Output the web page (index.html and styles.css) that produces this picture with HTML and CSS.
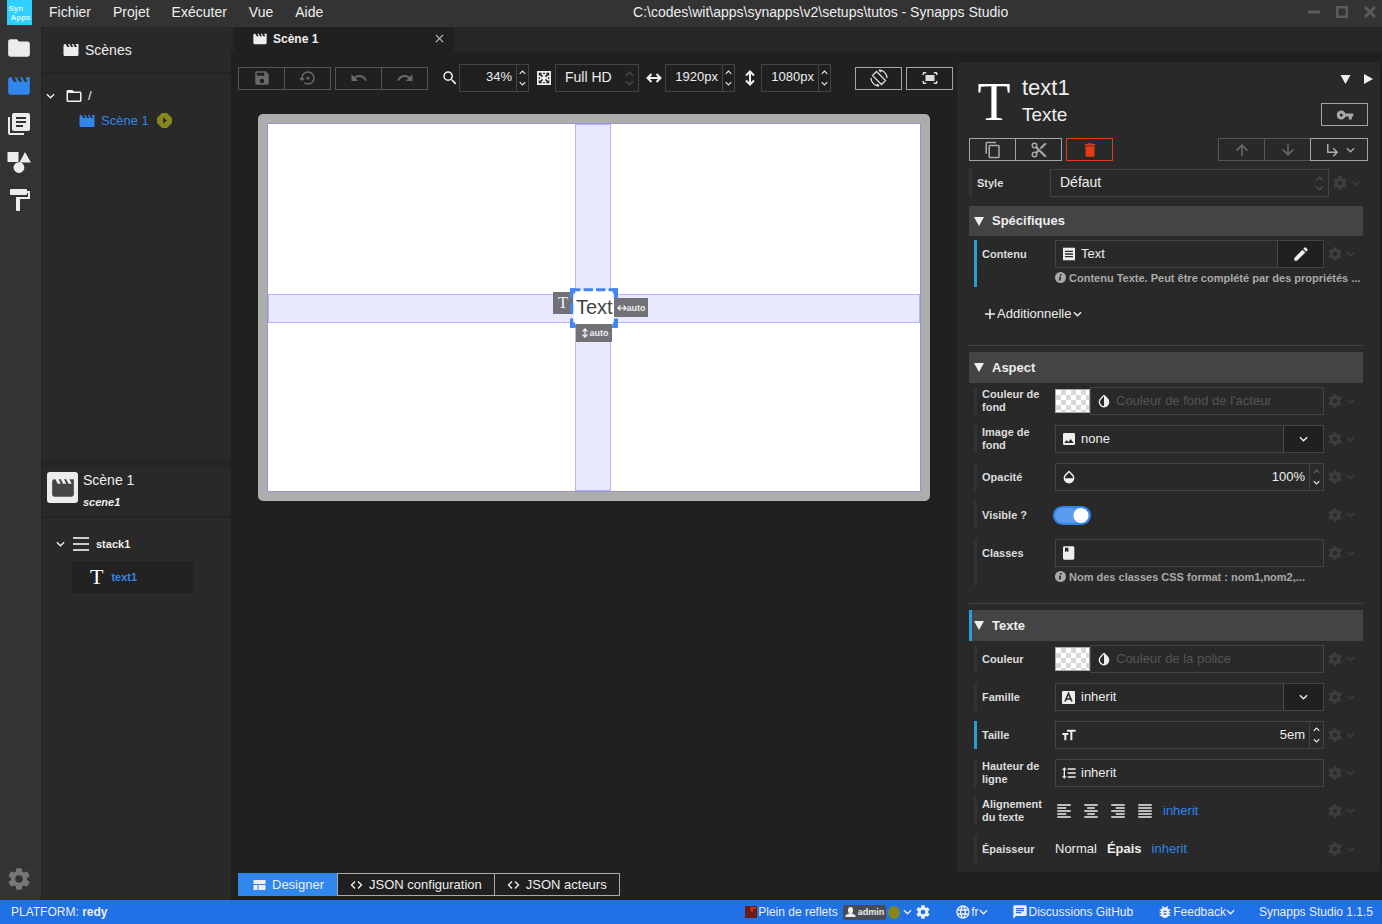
FILE: index.html
```html
<!DOCTYPE html>
<html lang="fr">
<head>
<meta charset="utf-8">
<title>Synapps Studio</title>
<meta name="viewport" content="width=device-width, initial-scale=1">
<link rel="stylesheet" href="styles.css">
</head>
<body>
<svg class="sprite" aria-hidden="true">
<symbol id="i-folder" viewBox="0 0 24 24"><path d="M10,4H4C2.89,4 2,4.89 2,6V18A2,2 0 0,0 4,20H20A2,2 0 0,0 22,18V8C22,6.89 21.1,6 20,6H12L10,4Z"/></symbol>
<symbol id="i-folder-o" viewBox="0 0 24 24"><path d="M20,18H4V8H20M20,6H12L10,4H4C2.89,4 2,4.89 2,6V18A2,2 0 0,0 4,20H20A2,2 0 0,0 22,18V8C22,6.89 21.1,6 20,6Z"/></symbol>
<symbol id="i-movie" viewBox="0 0 24 24"><path d="M18,4L20,8H17L15,4H13L15,8H12L10,4H8L10,8H7L5,4H4A2,2 0 0,0 2,6V18A2,2 0 0,0 4,20H20A2,2 0 0,0 22,18V4H18Z"/></symbol>
<symbol id="i-library" viewBox="0 0 24 24"><path d="M16,15H9V13H16M19,11H9V9H19M19,7H9V5H19M21,1H7C5.89,1 5,1.89 5,3V17C5,18.11 5.9,19 7,19H21C22.11,19 23,18.11 23,17V3C23,1.89 22.1,1 21,1M3,5V21H17V23H3A2,2 0 0,1 1,21V5H3Z"/></symbol>
<symbol id="i-shapes" viewBox="0 0 24 24"><path d="M0.500,2H11.500V12H0.500ZM18,2L24,12.500H12.500ZM12,12.200A5.400,5.400 0 1,1 11.900,12.200Z"/></symbol>
<symbol id="i-roller" viewBox="0 0 24 24"><path d="M20,3V2A1,1 0 0,0 19,1H4A1,1 0 0,0 3,2V6A1,1 0 0,0 4,7H19A1,1 0 0,0 20,6V5H21V9H9V22A1,1 0 0,0 10,23H12A1,1 0 0,0 13,22V11H23V3H20Z"/></symbol>
<symbol id="i-cog" viewBox="0 0 24 24"><path d="M12,15.5A3.5,3.5 0 0,1 8.5,12A3.5,3.5 0 0,1 12,8.5A3.5,3.5 0 0,1 15.5,12A3.5,3.5 0 0,1 12,15.5M19.43,12.97C19.47,12.65 19.5,12.33 19.5,12C19.5,11.67 19.47,11.34 19.43,11L21.54,9.37C21.73,9.22 21.78,8.95 21.66,8.73L19.66,5.27C19.54,5.05 19.27,4.96 19.05,5.05L16.56,6.05C16.04,5.66 15.5,5.32 14.87,5.07L14.5,2.42C14.46,2.18 14.25,2 14,2H10C9.75,2 9.54,2.18 9.5,2.42L9.13,5.07C8.5,5.32 7.96,5.66 7.44,6.05L4.95,5.05C4.73,4.96 4.46,5.05 4.34,5.27L2.34,8.73C2.21,8.95 2.27,9.22 2.46,9.37L4.57,11C4.53,11.34 4.5,11.67 4.5,12C4.5,12.33 4.53,12.65 4.57,12.97L2.46,14.63C2.27,14.78 2.21,15.05 2.34,15.27L4.34,18.73C4.46,18.95 4.73,19.03 4.95,18.95L7.44,17.94C7.96,18.34 8.5,18.68 9.13,18.93L9.5,21.58C9.54,21.82 9.75,22 10,22H14C14.25,22 14.46,21.82 14.5,21.58L14.87,18.93C15.5,18.67 16.04,18.34 16.56,17.94L19.05,18.95C19.27,19.03 19.54,18.95 19.66,18.73L21.66,15.27C21.78,15.05 21.73,14.78 21.54,14.63L19.43,12.97Z"/></symbol>
<symbol id="i-chev" viewBox="0 0 10 6"><path d="M1,1L5,5L9,1" fill="none" stroke="currentColor" stroke-width="1.500"/></symbol>
<symbol id="i-chev-up" viewBox="0 0 10 6"><path d="M1,5L5,1L9,5" fill="none" stroke="currentColor" stroke-width="1.500"/></symbol>
<symbol id="i-close" viewBox="0 0 10 10"><path d="M1,1L9,9M9,1L1,9" fill="none" stroke="currentColor" stroke-width="1.400"/></symbol>
<symbol id="i-save" viewBox="0 0 24 24"><path d="M15,9H5V5H15M12,19A3,3 0 0,1 9,16A3,3 0 0,1 12,13A3,3 0 0,1 15,16A3,3 0 0,1 12,19M17,3H5C3.89,3 3,3.9 3,5V19A2,2 0 0,0 5,21H19A2,2 0 0,0 21,19V7L17,3Z"/></symbol>
<symbol id="i-restore" viewBox="0 0 24 24"><path d="M12,3A9,9 0 0,0 3,12H0L4,16L8,12H5A7,7 0 0,1 12,5A7,7 0 0,1 19,12A7,7 0 0,1 12,19C10.5,19 9.09,18.5 7.94,17.7L6.5,19.14C8.04,20.3 9.94,21 12,21A9,9 0 0,0 21,12A9,9 0 0,0 12,3M14,12A2,2 0 0,0 12,10A2,2 0 0,0 10,12A2,2 0 0,0 12,14A2,2 0 0,0 14,12Z"/></symbol>
<symbol id="i-undo" viewBox="0 0 24 24"><path d="M12.5,8C9.85,8 7.45,9 5.6,10.6L2,7V16H11L7.38,12.38C8.77,11.22 10.54,10.5 12.5,10.5C16.04,10.5 19.05,12.81 20.1,16L22.47,15.22C21.08,11.03 17.15,8 12.5,8Z"/></symbol>
<symbol id="i-redo" viewBox="0 0 24 24"><path d="M18.4,10.6C16.55,9 14.15,8 11.5,8C6.85,8 2.92,11.03 1.54,15.22L3.9,16C4.95,12.81 7.95,10.5 11.5,10.5C13.45,10.5 15.23,11.22 16.62,12.38L13,16H22V7L18.4,10.6Z"/></symbol>
<symbol id="i-magnify" viewBox="0 0 24 24"><path d="M9.5,3A6.5,6.5 0 0,1 16,9.5C16,11.11 15.41,12.59 14.44,13.73L14.71,14H15.5L20.5,19L19,20.5L14,15.5V14.71L13.73,14.44C12.59,15.41 11.11,16 9.5,16A6.5,6.5 0 0,1 3,9.5A6.5,6.5 0 0,1 9.5,3M9.5,5C7,5 5,7 5,9.5C5,12 7,14 9.5,14C12,14 14,12 14,9.5C14,7 12,5 9.5,5Z"/></symbol>
<symbol id="i-fitall" viewBox="0 0 16 16"><rect width="16" height="16" fill="#eee"/><path d="M2,2H6L4.700,3.300L7,5.600L5.600,7L3.300,4.700L2,6ZM14,2V6L12.700,4.700L10.400,7L9,5.600L11.300,3.300L10,2ZM2,14V10L3.300,11.300L5.600,9L7,10.400L4.700,12.700L6,14ZM14,14H10L11.300,12.700L9,10.400L10.400,9L12.700,11.300L14,10ZM7,2H9V3.500H7ZM7,12.500H9V14H7ZM2,7H3.500V9H2ZM12.500,7H14V9H12.500Z" fill="#222"/></symbol>
<symbol id="i-horiz" viewBox="0 0 16 16"><path d="M2,8H14M5.500,4L1.500,8L5.500,12M10.500,4L14.500,8L10.500,12" fill="none" stroke="currentColor" stroke-width="2"/></symbol>
<symbol id="i-vert" viewBox="0 0 16 16"><path d="M8,2V14M4,5.500L8,1.500L12,5.500M4,10.500L8,14.500L12,10.500" fill="none" stroke="currentColor" stroke-width="2"/></symbol>
<symbol id="i-rotate" viewBox="0 0 18 18"><path d="M6.500,2.500L15.500,11.500L11.500,15.500L2.500,6.500ZM9,1A8,8 0 0,1 17,9M9,17A8,8 0 0,1 1,9M9,1L11,3M9,17L7,15" fill="none" stroke="currentColor" stroke-width="1.300"/></symbol>
<symbol id="i-fit" viewBox="0 0 24 24"><path d="M17 4H20C21.1 4 22 4.9 22 6V8H20V6H17V4M4 8V6H7V4H4C2.9 4 2 4.9 2 6V8H4M20 16V18H17V20H20C21.1 20 22 19.1 22 18V16H20M7 18H4V16H2V18C2 19.1 2.9 20 4 20H7V18M18 8H6V16H18V8Z"/></symbol>
<symbol id="i-key" viewBox="0 0 24 24"><path d="M7,14A2,2 0 0,1 5,12A2,2 0 0,1 7,10A2,2 0 0,1 9,12A2,2 0 0,1 7,14M12.65,10C11.83,7.67 9.61,6 7,6A6,6 0 0,0 1,12A6,6 0 0,0 7,18C9.61,18 11.83,16.33 12.65,14H17V18H21V14H23V10H12.65Z"/></symbol>
<symbol id="i-copy" viewBox="0 0 24 24"><path d="M19,21H8V7H19M19,5H8A2,2 0 0,0 6,7V21A2,2 0 0,0 8,23H19A2,2 0 0,0 21,21V7A2,2 0 0,0 19,5M16,1H4A2,2 0 0,0 2,3V17H4V3H16V1Z"/></symbol>
<symbol id="i-cut" viewBox="0 0 24 24"><path d="M19,3L13,9L15,11L22,4V3M12,12.5A0.5,0.5 0 0,1 11.5,12A0.5,0.5 0 0,1 12,11.5A0.5,0.5 0 0,1 12.5,12A0.5,0.5 0 0,1 12,12.5M6,20A2,2 0 0,1 4,18C4,16.89 4.9,16 6,16A2,2 0 0,1 8,18C8,19.11 7.1,20 6,20M6,8A2,2 0 0,1 4,6C4,4.89 4.9,4 6,4A2,2 0 0,1 8,6C8,7.11 7.1,8 6,8M9.64,7.64C9.87,7.14 10,6.59 10,6A4,4 0 0,0 6,2A4,4 0 0,0 2,6A4,4 0 0,0 6,10C6.59,10 7.14,9.87 7.64,9.64L10,12L7.64,14.36C7.14,14.13 6.59,14 6,14A4,4 0 0,0 2,18A4,4 0 0,0 6,22A4,4 0 0,0 10,18C10,17.41 9.87,16.86 9.64,16.36L12,14L19,21H22V20L9.64,7.64Z"/></symbol>
<symbol id="i-delete" viewBox="0 0 24 24"><path d="M19,4H15.5L14.5,3H9.5L8.5,4H5V6H19M6,19A2,2 0 0,0 8,21H16A2,2 0 0,0 18,19V7H6V19Z"/></symbol>
<symbol id="i-up-arrow" viewBox="0 0 24 24"><path d="M13,20H11V8L5.5,13.5L4.08,12.08L12,4.16L19.92,12.08L18.5,13.5L13,8V20Z"/></symbol>
<symbol id="i-down-arrow" viewBox="0 0 24 24"><path d="M11,4H13V16L18.5,10.5L19.92,11.92L12,19.84L4.08,11.92L5.5,10.5L11,16V4Z"/></symbol>
<symbol id="i-sub" viewBox="0 0 24 24"><path d="M19 15L13 21L11.58 19.58L15.17 16H4V4H6V14H15.17L11.58 10.42L13 9L19 15Z"/></symbol>
<symbol id="i-pencil" viewBox="0 0 24 24"><path d="M20.71,7.04C21.1,6.65 21.1,6 20.71,5.63L18.37,3.29C18,2.9 17.35,2.9 16.96,3.29L15.12,5.12L18.87,8.87M3,17.25V21H6.75L17.81,9.93L14.06,6.18L3,17.25Z"/></symbol>
<symbol id="i-receipt" viewBox="0 0 24 24"><path d="M3,22L4.5,20.5L6,22L7.5,20.5L9,22L10.5,20.5L12,22L13.5,20.5L15,22L16.5,20.5L18,22L19.5,20.5L21,22V2L19.5,3.5L18,2L16.5,3.5L15,2L13.5,3.5L12,2L10.5,3.5L9,2L7.5,3.5L6,2L4.5,3.5L3,2M18,9H6V7H18M18,13H6V11H18M18,17H6V15H18V17Z"/></symbol>
<symbol id="i-invert" viewBox="0 0 24 24"><path d="M12,4.81V19.58C9,19.58 6,17 6,13.58C6,12 6.62,10.47 7.76,9.34L12,4.81M17.66,7.93L12,2.27L6.34,7.93C3.22,11.05 3.22,16.12 6.34,19.24C7.9,20.8 9.95,21.58 12,21.58C14.05,21.58 16.1,20.8 17.66,19.24C20.78,16.12 20.78,11.05 17.66,7.93Z"/></symbol>
<symbol id="i-image" viewBox="0 0 24 24"><path d="M8.5,13.5L11,16.5L14.5,12L19,18H5M21,19V5C21,3.89 20.1,3 19,3H5A2,2 0 0,0 3,5V19A2,2 0 0,0 5,21H19A2,2 0 0,0 21,19Z"/></symbol>
<symbol id="i-opacity" viewBox="0 0 24 24"><path d="M17.66,8L12,2.35L6.34,8C4.78,9.56 4,11.64 4,13.64C4,15.64 4.78,17.75 6.34,19.31C7.9,20.87 9.95,21.66 12,21.66C14.05,21.66 16.1,20.87 17.66,19.31C19.22,17.75 20,15.64 20,13.64C20,11.64 19.22,9.56 17.66,8M6,14C6,12 6.62,10.73 7.76,9.6L12,5.27L16.24,9.65C17.38,10.77 18,12 18,14H6Z"/></symbol>
<symbol id="i-book" viewBox="0 0 24 24"><path d="M18,22A2,2 0 0,0 20,20V4C20,2.89 19.1,2 18,2H5A2,2 0 0,0 3,4V20A2,2 0 0,0 5,22H18ZM6,4H11V11L8.500,9L6,11Z" fill-rule="evenodd"/></symbol>
<symbol id="i-size" viewBox="0 0 24 24"><path d="M2,12H5V20H8V12H11V9H2M9,4V7H14V20H17V7H22V4H9Z"/></symbol>
<symbol id="i-lineheight" viewBox="0 0 24 24"><path d="M10,13H22V11H10M10,19H22V17H10M10,7H22V5H10M6,7H8.5L5,3.5L1.5,7H4V17H1.5L5,20.5L8.5,17H6V7Z"/></symbol>
<symbol id="i-al" viewBox="0 0 24 24"><path d="M3,3H21V5H3V3M3,7H15V9H3V7M3,11H21V13H3V11M3,15H15V17H3V15M3,19H21V21H3V19Z"/></symbol>
<symbol id="i-ac" viewBox="0 0 24 24"><path d="M3,3H21V5H3V3M7,7H17V9H7V7M3,11H21V13H3V11M7,15H17V17H7V15M3,19H21V21H3V19Z"/></symbol>
<symbol id="i-ar" viewBox="0 0 24 24"><path d="M3,3H21V5H3V3M9,7H21V9H9V7M3,11H21V13H3V11M9,15H21V17H9V15M3,19H21V21H3V19Z"/></symbol>
<symbol id="i-aj" viewBox="0 0 24 24"><path d="M3,3H21V5H3V3M3,7H21V9H3V7M3,11H21V13H3V11M3,15H21V17H3V15M3,19H21V21H3V19Z"/></symbol>
<symbol id="i-info" viewBox="0 0 11 11"><circle cx="5.500" cy="5.500" r="5.500"/><path d="M5.200,4.600L4.700,8.500M5.800,2V3.400" stroke="#292929" stroke-width="1.700" fill="none"/></symbol>
<symbol id="i-web" viewBox="0 0 24 24"><path d="M16.36,14C16.44,13.34 16.5,12.68 16.5,12C16.5,11.32 16.44,10.66 16.36,10H19.74C19.9,10.64 20,11.31 20,12C20,12.69 19.9,13.36 19.74,14M14.59,19.56C15.19,18.45 15.65,17.25 15.97,16H18.92C17.96,17.65 16.43,18.93 14.59,19.56M14.34,14H9.66C9.56,13.34 9.5,12.68 9.5,12C9.5,11.32 9.56,10.65 9.66,10H14.34C14.43,10.65 14.5,11.32 14.5,12C14.5,12.68 14.43,13.34 14.34,14M12,19.96C11.17,18.76 10.5,17.43 10.09,16H13.91C13.5,17.43 12.83,18.76 12,19.96M8,8H5.08C6.03,6.34 7.57,5.06 9.4,4.44C8.8,5.55 8.35,6.75 8,8M5.08,16H8C8.35,17.25 8.8,18.45 9.4,19.56C7.57,18.93 6.03,17.65 5.08,16M4.26,14C4.1,13.36 4,12.69 4,12C4,11.31 4.1,10.64 4.26,10H7.64C7.56,10.66 7.5,11.32 7.5,12C7.5,12.68 7.56,13.34 7.64,14M12,4.03C12.83,5.23 13.5,6.57 13.91,8H10.09C10.5,6.57 11.17,5.23 12,4.03M18.92,8H15.97C15.65,6.75 15.19,5.55 14.59,4.44C16.43,5.07 17.96,6.34 18.92,8M12,2C6.47,2 2,6.5 2,12A10,10 0 0,0 12,22A10,10 0 0,0 22,12A10,10 0 0,0 12,2Z"/></symbol>
<symbol id="i-chat" viewBox="0 0 24 24"><path fill-rule="evenodd" d="M20,2H4A2,2 0 0,0 2,4V22L6,18H20A2,2 0 0,0 22,16V4A2,2 0 0,0 20,2ZM6,9H18V11H6ZM14,14H6V12H14ZM18,8H6V6H18Z"/></symbol>
<symbol id="i-bug" viewBox="0 0 24 24"><path d="M14,12H10V10H14M14,16H10V14H14M20,8H17.19C16.74,7.22 16.12,6.55 15.37,6.04L17,4.41L15.59,3L13.42,5.17C12.96,5.06 12.5,5 12,5C11.5,5 11.04,5.06 10.59,5.17L8.41,3L7,4.41L8.62,6.04C7.88,6.55 7.26,7.22 6.81,8H4V10H6.09C6.04,10.33 6,10.66 6,11V12H4V14H6V15C6,15.34 6.04,15.67 6.09,16H4V18H6.81C7.85,19.79 9.78,21 12,21C14.22,21 16.15,19.79 17.19,18H20V16H17.91C17.96,15.67 18,15.34 18,15V14H20V12H18V11C18,10.66 17.96,10.33 17.91,10H20V8Z"/></symbol>
<symbol id="i-quilt" viewBox="0 0 12 10"><path d="M0,0H12V4H0ZM0,5H4V10H0ZM5,5H12V10H5Z"/></symbol>
<symbol id="i-code" viewBox="0 0 12 8"><path d="M4.500,0.500L1,4L4.500,7.500M7.500,0.500L11,4L7.500,7.500" fill="none" stroke="currentColor" stroke-width="1.400"/></symbol>
<symbol id="i-tri-down" viewBox="0 0 10 9"><path d="M0,0H10L5,9Z"/></symbol>
<symbol id="i-tri-right" viewBox="0 0 9 10"><path d="M0,0L9,5L0,10Z"/></symbol>
<symbol id="i-user" viewBox="0 0 12 12"><ellipse cx="6" cy="4" rx="3" ry="4"/><path d="M0,12V10L4.500,7.500H7.500L12,10V12Z"/></symbol>
<symbol id="i-menu" viewBox="0 0 16 14"><path d="M0,0H16V2H0ZM0,6H16V8H0ZM0,12H16V14H0Z"/></symbol>
<symbol id="i-plus" viewBox="0 0 10 10"><path d="M5,0V10M0,5H10" fill="none" stroke="currentColor" stroke-width="1.500"/></symbol>
</svg>

<div class="shell">
  <nav class="rail" aria-label="Modules">
    <div class="logo"><span>Syn</span><span>Apps</span></div>
    <button aria-label="Fichiers"><svg class="s26"><use href="#i-folder"/></svg></button>
    <button class="on" aria-label="Scènes"><svg class="s26"><use href="#i-movie"/></svg></button>
    <button aria-label="Bibliothèque"><svg class="s24"><use href="#i-library"/></svg></button>
    <button aria-label="Formes"><svg class="s24"><use href="#i-shapes"/></svg></button>
    <button aria-label="Thème"><svg class="s24"><use href="#i-roller"/></svg></button>
    <button class="last" aria-label="Réglages"><svg class="s26"><use href="#i-cog"/></svg></button>
  </nav>

  <div class="app">
    <header class="titlebar">
      <nav class="menu"><button>Fichier</button><button>Projet</button><button>Exécuter</button><button>Vue</button><button>Aide</button></nav>
      <span class="path">C:\codes\wit\apps\synapps\v2\setups\tutos - Synapps Studio</span>
      <div class="winbtns">
        <button aria-label="Réduire"><svg viewBox="0 0 12 12"><path d="M0,6H12"/></svg></button>
        <button aria-label="Agrandir"><svg viewBox="0 0 12 12"><path d="M1,1H11V11H1Z"/></svg></button>
        <button aria-label="Fermer"><svg viewBox="0 0 12 12"><path d="M1,1L11,11M11,1L1,11"/></svg></button>
      </div>
    </header>

    <div class="work">
      <aside class="side">
        <section class="panel scenes">
          <h2><svg class="s18"><use href="#i-movie"/></svg>Scènes</h2>
          <ul class="tree">
            <li><svg class="chev"><use href="#i-chev"/></svg><svg class="s18"><use href="#i-folder-o"/></svg><span>/</span></li>
            <li class="child"><svg class="s18"><use href="#i-movie"/></svg><span>Scène 1</span><svg class="play" viewBox="0 0 15 15"><path fill="#86861a" d="M5,0H10L15,5V10L10,15H5L0,10V5Z"/><path fill="#292929" d="M6,4.500L10,7.500L6,10.500Z"/></svg></li>
          </ul>
        </section>
        <section class="panel outline">
          <header><span class="thumb"><svg class="s26"><use href="#i-movie"/></svg></span><div><b>Scène 1</b><i>scene1</i></div></header>
          <ul class="actors">
            <li><svg class="chev"><use href="#i-chev"/></svg><svg class="stack"><use href="#i-menu"/></svg><span>stack1</span></li>
            <li class="sel"><em>T</em><span>text1</span></li>
          </ul>
        </section>
      </aside>

      <main class="main">
        <div class="tabs"><div class="tab"><svg class="s16"><use href="#i-movie"/></svg><b>Scène 1</b><button aria-label="Fermer l'onglet"><svg><use href="#i-close"/></svg></button></div></div>
        <div class="editor">
          <div class="center">
            <div class="toolbar">
              <div class="group dim"><button aria-label="Enregistrer"><svg class="s18"><use href="#i-save"/></svg></button><button aria-label="Restaurer"><svg class="s18"><use href="#i-restore"/></svg></button></div>
              <div class="group dim"><button aria-label="Annuler"><svg class="s18"><use href="#i-undo"/></svg></button><button aria-label="Rétablir"><svg class="s18"><use href="#i-redo"/></svg></button></div>
              <label class="tlabel zoom" for="zoom"><svg class="s18"><use href="#i-magnify"/></svg></label>
              <div class="num"><input id="zoom" value="34%"><span class="steps"><button aria-label="Plus"><svg><use href="#i-chev-up"/></svg></button><button aria-label="Moins"><svg><use href="#i-chev"/></svg></button></span></div>
              <label class="tlabel" for="format"><svg class="s14"><use href="#i-fitall"/></svg></label>
              <div class="selectbox fmtbox"><select id="format"><option>Full HD</option></select><span class="updown"><svg><use href="#i-chev-up"/></svg><svg><use href="#i-chev"/></svg></span></div>
              <label class="tlabel" for="w"><svg class="s16"><use href="#i-horiz"/></svg></label>
              <div class="num"><input id="w" value="1920px"><span class="steps"><button aria-label="Plus"><svg><use href="#i-chev-up"/></svg></button><button aria-label="Moins"><svg><use href="#i-chev"/></svg></button></span></div>
              <label class="tlabel" for="h"><svg class="s16"><use href="#i-vert"/></svg></label>
              <div class="num"><input id="h" value="1080px"><span class="steps"><button aria-label="Plus"><svg><use href="#i-chev-up"/></svg></button><button aria-label="Moins"><svg><use href="#i-chev"/></svg></button></span></div>
              <button class="btn rot" aria-label="Pivoter"><svg class="s18"><use href="#i-rotate"/></svg></button>
              <button class="btn" aria-label="Ajuster"><svg class="s18"><use href="#i-fit"/></svg></button>
            </div>
            <div class="stage">
              <div class="canvas">
                <div class="band-v"></div><div class="band-h"></div>
                <div class="badge kind">T</div>
                <div class="actor">Text</div>
                <svg class="handles" viewBox="0 0 46 38"><path d="M0,0H10V3H3V10H0ZM13,0H22V3H13ZM25,0H34V3H25ZM37,0H46V10H42V3H37ZM0,14H3V24H0ZM0,29H3V35H10V38H0ZM13,35H22V38H13ZM25,35H34V38H25ZM46,29V38H37V35H42V29Z"/><path d="M0,0H5V5H0ZM41,0H46V5H41ZM0,33H5V38H0ZM41,33H46V38H41Z"/></svg>
                <div class="badge wide"><svg><use href="#i-horiz"/></svg>auto</div>
                <div class="badge tall"><svg><use href="#i-vert"/></svg>auto</div>
              </div>
            </div>
            <div class="modes">
              <button class="on"><svg class="quilt"><use href="#i-quilt"/></svg>Designer</button><button><svg class="code"><use href="#i-code"/></svg>JSON configuration</button><button><svg class="code"><use href="#i-code"/></svg>JSON acteurs</button>
            </div>
          </div>

          <aside class="inspector">
            <header class="head">
              <em>T</em>
              <div class="names"><h1>text1</h1><p>Texte</p></div>
              <div class="corner">
                <div class="tris"><button aria-label="Replier"><svg class="td"><use href="#i-tri-down"/></svg></button><button aria-label="Suivant"><svg class="tr"><use href="#i-tri-right"/></svg></button></div>
                <button class="btn" aria-label="Verrou"><svg class="s18"><use href="#i-key"/></svg></button>
              </div>
            </header>
            <div class="actions">
              <div class="group lit"><button aria-label="Copier"><svg class="s18"><use href="#i-copy"/></svg></button><button aria-label="Couper"><svg class="s18"><use href="#i-cut"/></svg></button></div>
              <button class="btn danger" aria-label="Supprimer"><svg class="s18"><use href="#i-delete"/></svg></button>
              <div class="group dim push"><button aria-label="Monter"><svg class="s18"><use href="#i-up-arrow"/></svg></button><button aria-label="Descendre"><svg class="s18"><use href="#i-down-arrow"/></svg></button></div>
              <button class="btn move" aria-label="Déplacer"><svg class="s18"><use href="#i-sub"/></svg><svg class="chev"><use href="#i-chev"/></svg></button>
            </div>
            <div class="row styler"><label for="style">Style</label><div class="field"><div class="selectbox"><select id="style"><option>Défaut</option></select><span class="updown"><svg><use href="#i-chev-up"/></svg><svg><use href="#i-chev"/></svg></span></div></div><button class="opt" aria-label="Options"><svg class="s16"><use href="#i-cog"/></svg><svg class="chev"><use href="#i-chev"/></svg></button></div>

            <section class="props">
              <h3><svg><use href="#i-tri-down"/></svg>Spécifiques</h3>
              <div class="row set"><label for="contenu">Contenu</label><div class="field"><div class="box"><svg class="s16"><use href="#i-receipt"/></svg><input id="contenu" value="Text"><button class="side-btn edit" aria-label="Modifier"><svg class="s18"><use href="#i-pencil"/></svg></button></div></div><button class="opt" aria-label="Options"><svg class="s16"><use href="#i-cog"/></svg><svg class="chev"><use href="#i-chev"/></svg></button><p class="hint"><svg><use href="#i-info"/></svg>Contenu Texte. Peut être complété par des propriétés ...</p></div>
              <button class="add"><svg class="plus"><use href="#i-plus"/></svg>Additionnelle<svg class="chev"><use href="#i-chev"/></svg></button>
            </section>

            <section class="props ruled">
              <h3><svg><use href="#i-tri-down"/></svg>Aspect</h3>
              <div class="row"><label for="fond">Couleur de fond</label><div class="field"><button class="swatch" aria-label="Choisir la couleur de fond"></button><div class="box"><svg class="s16"><use href="#i-invert"/></svg><input id="fond" placeholder="Couleur de fond de l'acteur"></div></div><button class="opt" aria-label="Options"><svg class="s16"><use href="#i-cog"/></svg><svg class="chev"><use href="#i-chev"/></svg></button></div>
              <div class="row"><label for="image">Image de fond</label><div class="field"><div class="box"><svg class="s16"><use href="#i-image"/></svg><input id="image" value="none"><button class="side-btn" aria-label="Ouvrir"><svg class="chev"><use href="#i-chev"/></svg></button></div></div><button class="opt" aria-label="Options"><svg class="s16"><use href="#i-cog"/></svg><svg class="chev"><use href="#i-chev"/></svg></button></div>
              <div class="row"><label for="opacite">Opacité</label><div class="field"><div class="box numeric"><svg class="s16"><use href="#i-opacity"/></svg><input id="opacite" value="100%"><span class="steps"><button class="off" aria-label="Plus"><svg><use href="#i-chev-up"/></svg></button><button aria-label="Moins"><svg><use href="#i-chev"/></svg></button></span></div></div><button class="opt" aria-label="Options"><svg class="s16"><use href="#i-cog"/></svg><svg class="chev"><use href="#i-chev"/></svg></button></div>
              <div class="row"><label for="visible">Visible ?</label><div class="field"><input class="switch" id="visible" type="checkbox" checked></div><button class="opt" aria-label="Options"><svg class="s16"><use href="#i-cog"/></svg><svg class="chev"><use href="#i-chev"/></svg></button></div>
              <div class="row"><label for="classes">Classes</label><div class="field"><div class="box"><svg class="s16"><use href="#i-book"/></svg><input id="classes"></div></div><button class="opt" aria-label="Options"><svg class="s16"><use href="#i-cog"/></svg><svg class="chev"><use href="#i-chev"/></svg></button><p class="hint"><svg><use href="#i-info"/></svg>Nom des classes CSS format : nom1,nom2,...</p></div>
            </section>

            <section class="props ruled">
              <h3 class="set"><svg><use href="#i-tri-down"/></svg>Texte</h3>
              <div class="row"><label for="couleur">Couleur</label><div class="field"><button class="swatch" aria-label="Choisir la couleur"></button><div class="box"><svg class="s16"><use href="#i-invert"/></svg><input id="couleur" placeholder="Couleur de la police"></div></div><button class="opt" aria-label="Options"><svg class="s16"><use href="#i-cog"/></svg><svg class="chev"><use href="#i-chev"/></svg></button></div>
              <div class="row"><label for="famille">Famille</label><div class="field"><div class="box"><svg class="s16" viewBox="0 0 16 16"><rect x="1" y="2" width="13" height="13" rx="1"/><path d="M4,12.500L7.500,4.500L11,12.500M5.500,10H9.500" fill="none" stroke="#292929" stroke-width="1.600"/></svg><input id="famille" value="inherit"><button class="side-btn" aria-label="Ouvrir"><svg class="chev"><use href="#i-chev"/></svg></button></div></div><button class="opt" aria-label="Options"><svg class="s16"><use href="#i-cog"/></svg><svg class="chev"><use href="#i-chev"/></svg></button></div>
              <div class="row set"><label for="taille">Taille</label><div class="field"><div class="box numeric"><svg class="s16"><use href="#i-size"/></svg><input id="taille" value="5em"><span class="steps"><button aria-label="Plus"><svg><use href="#i-chev-up"/></svg></button><button aria-label="Moins"><svg><use href="#i-chev"/></svg></button></span></div></div><button class="opt" aria-label="Options"><svg class="s16"><use href="#i-cog"/></svg><svg class="chev"><use href="#i-chev"/></svg></button></div>
              <div class="row"><label for="hauteur">Hauteur de ligne</label><div class="field"><div class="box"><svg class="s16"><use href="#i-lineheight"/></svg><input id="hauteur" value="inherit"></div></div><button class="opt" aria-label="Options"><svg class="s16"><use href="#i-cog"/></svg><svg class="chev"><use href="#i-chev"/></svg></button></div>
              <div class="row"><span class="lab">Alignement du texte</span><div class="field choices aligns"><button aria-label="Gauche"><svg class="s18"><use href="#i-al"/></svg></button><button aria-label="Centre"><svg class="s18"><use href="#i-ac"/></svg></button><button aria-label="Droite"><svg class="s18"><use href="#i-ar"/></svg></button><button aria-label="Justifié"><svg class="s18"><use href="#i-aj"/></svg></button><button class="on">inherit</button></div><button class="opt" aria-label="Options"><svg class="s16"><use href="#i-cog"/></svg><svg class="chev"><use href="#i-chev"/></svg></button></div>
              <div class="row"><span class="lab">Épaisseur</span><div class="field choices"><button>Normal</button><button class="bold">Épais</button><button class="on">inherit</button></div><button class="opt" aria-label="Options"><svg class="s16"><use href="#i-cog"/></svg><svg class="chev"><use href="#i-chev"/></svg></button></div>
            </section>
          </aside>
        </div>
      </main>
    </div>
  </div>
</div>

<footer class="status">
  <span>PLATFORM: <b>redy</b></span>
  <div class="session">
    <svg class="mark" viewBox="0 0 12 12"><path fill="#6d1b16" d="M0,0H12V12H0Z"/><path fill="#c8321f" d="M5,1H11V3H8V6H6Z"/></svg>
    <span>Plein de reflets</span>
    <span class="admin"><svg><use href="#i-user"/></svg>admin</span>
    <span class="dot"></span>
    <svg class="chev"><use href="#i-chev"/></svg>
    <svg class="s16"><use href="#i-cog"/></svg>
  </div>
  <button class="lang"><svg class="s16"><use href="#i-web"/></svg>fr<svg class="chev"><use href="#i-chev"/></svg></button>
  <a href="#discussions"><svg class="s16"><use href="#i-chat"/></svg>Discussions GitHub</a>
  <button class="feed"><svg class="s16"><use href="#i-bug"/></svg>Feedback<svg class="chev"><use href="#i-chev"/></svg></button>
  <span>Synapps Studio 1.1.5</span>
</footer>
</body>
</html>
```
FILE: styles.css
```css
* { box-sizing: border-box; }
body { margin: 0; height: 100vh; display: flex; flex-direction: column; background: #202020; color: #eee; font: 14px/16px "Liberation Sans", Arial, sans-serif; overflow: hidden; }
button, input, select { font: inherit; color: inherit; background: none; border: 0; padding: 0; margin: 0; border-radius: 0; }
button { display: flex; align-items: center; justify-content: center; }
h1, h2, h3, p, ul { margin: 0; padding: 0; font-weight: normal; }
ul { list-style: none; }
svg { fill: currentColor; flex: none; display: block; }
em, i { font-style: normal; }
.sprite { position: absolute; width: 0; height: 0; }
.s14 { width: 14px; height: 14px; }
.s16 { width: 16px; height: 16px; }
.s18 { width: 18px; height: 18px; }
.s24 { width: 24px; height: 24px; }
.s26 { width: 26px; height: 26px; }
.chev { width: 9px; height: 6px; }

.shell { flex: 1; display: flex; min-height: 0; }
.rail { width: 41px; background: #333; display: flex; flex-direction: column; align-items: center; padding-right: 3px; }
.rail button { height: 38px; width: 38px; color: #ececec; }
.rail .on { color: #2f86eb; }
.rail .last { margin-top: auto; height: 42px; color: #777; }
.logo { width: 25px; height: 25px; margin-bottom: 4px; padding: 0 1px 0 2px; background: #2fd0ff; color: #d6f6ff; font: bold 8px/9px "Liberation Sans", sans-serif; display: flex; flex-direction: column; justify-content: center; }
.logo span + span { align-self: flex-end; }

.app { flex: 1; display: flex; flex-direction: column; min-width: 0; }
.titlebar { height: 27px; background: #333; display: flex; align-items: center; justify-content: space-between; padding: 0 6px 3px 8px; }
.menu { display: flex; gap: 22px; }
.winbtns { display: flex; gap: 16px; }
.winbtns svg { width: 12px; height: 12px; fill: none; stroke: #5a5a5a; stroke-width: 3; }
.path { white-space: nowrap; padding-left: 10px; }
.work { flex: 1; display: flex; min-height: 0; }

.side { width: 190px; display: flex; flex-direction: column; gap: 4px; background: #232323; padding-left: 1px; }
.panel { background: #292929; border-radius: 2px; }
.scenes { height: 434px; }
.outline { flex: 1; }
.scenes h2 { height: 47px; padding: 0 20px; display: flex; align-items: center; gap: 5px; font-size: 14px; border-bottom: 2px solid #242424; }
.tree { padding: 9px 4px; font-size: 13px; }
.tree li { display: flex; align-items: center; height: 25px; gap: 5px; }
.tree li:first-child .chev { margin-right: 5px; }
.tree .child { padding-left: 32px; color: #2f86eb; }
.play { width: 15px; height: 15px; margin-left: 3px; }
.outline header { height: 53px; padding: 7px 5px; display: flex; gap: 5px; border-bottom: 2px solid #242424; }
.outline header div { display: flex; flex-direction: column; gap: 7px; }
.outline b { font-weight: normal; }
.outline i { font: italic bold 11px/14px "Liberation Sans", sans-serif; }
.thumb { width: 31px; height: 31px; border-radius: 3px; background: #ececec; color: #444; display: grid; place-items: center; }
.actors { padding: 8px 14px; font: bold 11px/14px "Liberation Sans", sans-serif; }
.actors li { display: flex; align-items: center; height: 35px; gap: 7px; }
.stack { width: 16px; height: 14px; color: #ccc; margin-left: 1px; }
.actors .sel { height: 32px; width: 122px; margin-left: 16px; padding-left: 18px; gap: 8px; background: #222; color: #2f86eb; }
.sel em { color: #fff; font: 22px/24px "Liberation Serif", serif; }

.main { flex: 1; display: flex; flex-direction: column; min-width: 0; }
.tabs { height: 25px; background: #262626; padding-left: 3px; }
.tab { width: 220px; height: 25px; background: #202020; display: flex; align-items: center; gap: 5px; padding: 0 10px 2px 18px; }
.tab b { font-size: 12px; }
.tab button { margin-left: auto; color: #bbb; }
.tab button svg { width: 9px; height: 9px; }
.editor { flex: 1; display: flex; min-height: 0; }
.center { flex: 1; min-width: 0; display: flex; flex-direction: column; padding-left: 7px; }

.toolbar { padding: 12px 4px 0 0; display: flex; align-items: center; height: 40px; }
.group { display: flex; margin-right: 4px; }
.group button { width: 47px; height: 23px; border: 1px solid #a5a5a5; }
.group button + button { margin-left: -1px; }
.group.dim button { border-color: #555; color: #6a6a6a; }
.group.lit button { color: #aaa; }
.btn { width: 47px; height: 23px; border: 1px solid #a5a5a5; color: #ddd; }
.tlabel { width: 26px; padding-left: 4px; display: flex; justify-content: center; }
.tlabel.zoom { width: 27px; padding-left: 8px; }
.rot { margin: 0 4px 0 auto; }
.num { width: 70px; height: 28px; border: 1px solid #444; display: flex; font-size: 13px; }
.num input { flex: 1; min-width: 0; text-align: right; padding: 0 4px 2px; }
.steps { width: 12px; display: flex; flex-direction: column; justify-content: space-evenly; align-items: center; border-left: 1px solid #444; }
.steps svg { width: 7px; height: 5px; }
.steps .off { color: #666; }
.selectbox { position: relative; border: 1px solid #444; height: 28px; flex: 1; }
.fmtbox { flex: none; width: 84px; }
.selectbox select { width: 100%; height: 26px; padding: 0 9px 2px; appearance: none; }
.updown { position: absolute; right: 4px; top: 6px; display: flex; flex-direction: column; gap: 3px; color: #4a4a4a; pointer-events: none; }
.updown svg { width: 9px; height: 6px; }

.stage { flex: 1; padding: 22px 20px; }
.canvas { position: relative; width: 672px; height: 387px; border: 9px solid #acaeac; border-radius: 5px; background: #fff; box-shadow: inset 0 0 0 1px #9794d8; }
.band-v, .band-h { position: absolute; background: rgba(190, 190, 255, .35); border: 1px solid #b5b2f5; }
.band-v { left: 308px; top: 1px; bottom: 1px; width: 36px; }
.band-h { top: 171px; left: 1px; right: 1px; height: 29px; }
.actor { position: absolute; left: 307px; top: 167px; width: 41px; height: 36px; background: #fff; color: #444; font-size: 20px; line-height: 34px; padding-left: 2px; }
.handles { position: absolute; left: 303px; top: 165px; width: 48px; height: 40px; color: #4287ee; }
.badge { position: absolute; background: #717176; color: #eee; display: flex; align-items: center; justify-content: center; font: bold 9px/12px "Liberation Sans", sans-serif; }
.kind { left: 286px; top: 169px; width: 20px; height: 22px; font: 17px/20px "Liberation Serif", serif; }
.wide { left: 347px; top: 175px; width: 34px; height: 19px; }
.tall { left: 309px; top: 201px; width: 36px; height: 18px; }
.badge svg { width: 10px; height: 10px; }

.modes { display: flex; padding-bottom: 4px; font-size: 13px; }
.modes button { height: 23px; padding: 0 12px; gap: 6px; border: 1px solid #aaa; margin-right: -1px; }
.modes .on { background: #2f86eb; border-color: #2f86eb; padding: 0 13px 0 14px; }
.quilt { width: 13px; height: 10px; }
.code { width: 13px; height: 8px; }

.inspector { width: 423px; margin: 10px 2px 28px 0; padding: 12px 0 0 12px; background: #292929; border-radius: 4px; overflow: hidden; }
.head { display: flex; height: 64px; padding-right: 12px; }
.head em { width: 53px; text-align: center; font: 54px/56px "Liberation Serif", serif; color: #fff; padding-right: 3px; }
.names h1 { font-size: 22px; line-height: 28px; }
.names p { font-size: 19px; line-height: 25px; }
.corner { margin-left: auto; display: flex; flex-direction: column; align-items: flex-end; justify-content: space-between; padding-bottom: 12px; }
.tris { display: flex; gap: 13px; margin-right: -5px; }
.td { width: 11px; height: 9px; }
.tr { width: 9px; height: 10px; }
.corner .btn { color: #aaa; }
.actions { display: flex; padding-right: 12px; margin-bottom: 8px; }
.danger { border-color: #e63a12; color: #e63a12; }
.group.push { margin: 0 -1px 0 auto; }
.move { width: 58px; gap: 4px; color: #aaa; }

.row { display: grid; grid-template-columns: 73px 269px 1fr; align-items: center; margin: 0 0 10px 5px; padding-left: 5px; border-left: 3px solid #333; min-height: 28px; }
.row.set { border-left-color: #269fd6; }
.row label, .lab { font: bold 11px/13px "Liberation Sans", sans-serif; color: #ddd; padding-right: 12px; }
.field { display: flex; align-items: center; min-width: 0; font-size: 13px; }
.opt { justify-self: start; gap: 3px; margin-left: 3px; color: #3e3e3e; }
.styler { grid-template-columns: 73px 279px 1fr; margin: 0 12px 9px 0; }
.styler .field { font-size: 14px; }
.props { padding-right: 17px; }
.props h3 { height: 30px; background: #444; font: bold 13px/30px "Liberation Sans", sans-serif; display: flex; align-items: center; gap: 8px; padding-left: 5px; margin-bottom: 4px; }
.props h3.set { border-left: 3px solid #269fd6; padding-left: 2px; }
.props h3 svg { width: 10px; height: 9px; }
.ruled::before { content: ""; display: block; height: 1px; background: #444; margin-bottom: 6px; }
.ruled h3 { height: 31px; }
.ruled + .ruled { margin-top: 17px; }
.box { flex: 1; min-width: 0; height: 28px; border: 1px solid #444; display: flex; align-items: center; padding-left: 5px; gap: 4px; }
.box input { flex: 1; min-width: 0; padding-bottom: 1px; height: 26px; }
.box.numeric input { text-align: right; }
.box .steps { height: 26px; width: 14px; }
.box input::placeholder { color: #555; opacity: 1; }
.side-btn { width: 40px; height: 26px; background: #202020; border-left: 1px solid #4a4a4a; }
.side-btn.edit { width: 46px; }
.swatch { width: 35px; height: 24px; border: 1px solid #aaa; background: repeating-conic-gradient(#d8d8d8 0 25%, #fff 0 50%) 0 0 / 10px 10px; }
.hint { grid-column: 2 / 4; display: flex; align-items: center; gap: 3px; height: 19px; color: #aaa; font: bold 11px/14px "Liberation Sans", sans-serif; white-space: nowrap; }
.hint svg { width: 11px; height: 11px; }
.add { margin: 19px 0 24px 16px; height: 15px; gap: 2px; font-size: 13px; }
.plus { width: 10px; height: 10px; }
.switch { appearance: none; width: 38px; height: 19px; margin-left: -2px; border-radius: 10px; border: 2px solid #2f86eb; background: radial-gradient(circle at 26px 50%, #fff 7px, transparent 8px) #5a9bf0; }
.choices { gap: 10px; }
.aligns { gap: 9px; }
.choices .on { color: #2f86eb; }
.bold { font-weight: bold; }

.status { height: 24px; background: #2070e6; display: flex; align-items: center; padding: 0 9px 0 11px; font-size: 12px; white-space: nowrap; }
.status button, .status a { display: flex; align-items: center; color: inherit; text-decoration: none; }
.status a { gap: 1px; }
.session { display: flex; align-items: center; margin-left: auto; }
.mark { width: 12px; height: 12px; margin-right: 1px; }
.admin { display: flex; align-items: center; gap: 2px; height: 15px; margin: 0 2px 0 5px; padding: 0 2px; background: #484d55; border-radius: 2px; font: bold 9px/14px "Liberation Sans", sans-serif; }
.admin svg { width: 11px; height: 10px; }
.dot { width: 12px; height: 13px; border-radius: 50%; background: #86861a; }
.session .chev { margin: 0 3px; }
.lang { margin: 0 24px; }
.feed { margin: 0 24px; }
```
